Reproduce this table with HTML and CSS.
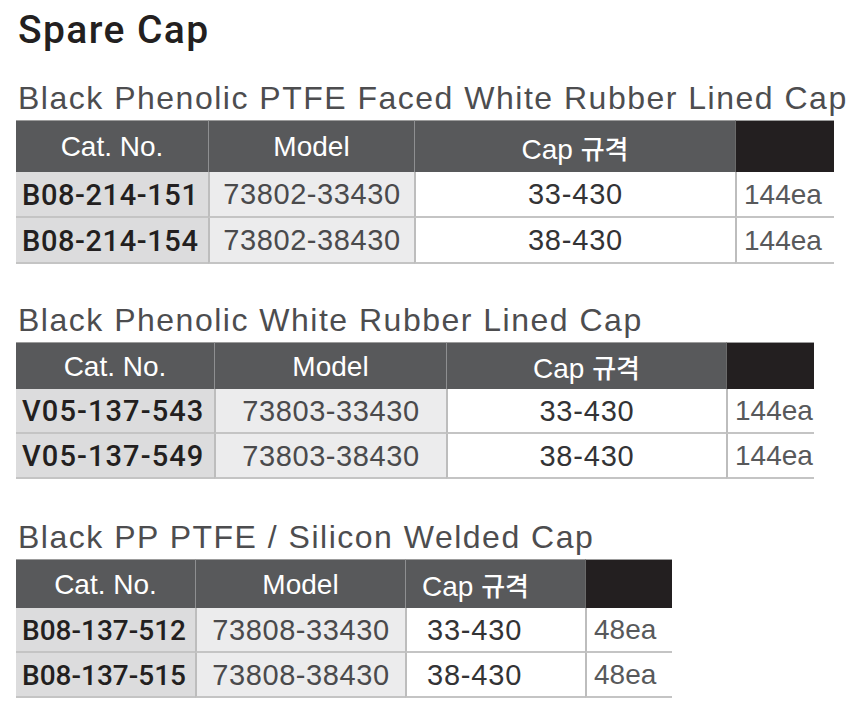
FILE: index.html
```html
<!DOCTYPE html>
<html lang="ko">
<head>
<meta charset="utf-8">
<title>Spare Cap</title>
<link rel="stylesheet" href="styles.css">
</head>
<body>
<main class="page">
  <h1 class="title">Spare Cap</h1>

  <section class="block b1">
    <h2 class="subtitle">Black Phenolic PTFE Faced White Rubber Lined Cap</h2>
    <div class="grid g1">
      <div class="th">Cat. No.</div>
      <div class="th">Model</div>
      <div class="th"><span>Cap <span class="ko">규격</span></span></div>
      <div class="th dark"></div>
      <div class="td cat">B08-214-151</div>
      <div class="td model">73802-33430</div>
      <div class="td cap center">33-430</div>
      <div class="td qty">144ea</div>
      <div class="td cat">B08-214-154</div>
      <div class="td model">73802-38430</div>
      <div class="td cap center">38-430</div>
      <div class="td qty">144ea</div>
    </div>
  </section>

  <section class="block b2">
    <h2 class="subtitle">Black Phenolic White Rubber Lined Cap</h2>
    <div class="grid g2">
      <div class="th">Cat. No.</div>
      <div class="th">Model</div>
      <div class="th"><span>Cap <span class="ko">규격</span></span></div>
      <div class="th dark"></div>
      <div class="td cat">V05-137-543</div>
      <div class="td model">73803-33430</div>
      <div class="td cap center">33-430</div>
      <div class="td qty">144ea</div>
      <div class="td cat">V05-137-549</div>
      <div class="td model">73803-38430</div>
      <div class="td cap center">38-430</div>
      <div class="td qty">144ea</div>
    </div>
  </section>

  <section class="block b3">
    <h2 class="subtitle">Black PP PTFE / Silicon Welded Cap</h2>
    <div class="grid g3">
      <div class="th">Cat. No.</div>
      <div class="th">Model</div>
      <div class="th left"><span>Cap <span class="ko">규격</span></span></div>
      <div class="th dark"></div>
      <div class="td cat">B08-137-512</div>
      <div class="td model">73808-33430</div>
      <div class="td cap">33-430</div>
      <div class="td qty">48ea</div>
      <div class="td cat">B08-137-515</div>
      <div class="td model">73808-38430</div>
      <div class="td cap">38-430</div>
      <div class="td qty">48ea</div>
    </div>
  </section>
</main>
</body>
</html>
```

FILE: styles.css
```css
* { box-sizing: border-box; }
html, body {
  margin: 0;
  padding: 0;
  background: #ffffff;
}
body {
  font-family: "Liberation Sans", Arial, "Noto Sans CJK KR", sans-serif;
  color: #231f20;
}
.page {
  padding: 10px 0 0 16px;
  width: 860px;
}
.title {
  margin: 0 0 0 2px;
  font-family: Roboto, "Liberation Sans", sans-serif;
  font-size: 39px;
  line-height: 40px;
  font-weight: 500;
  letter-spacing: 1.4px;
  color: #231f20;
}
.block { display: flex; flex-direction: column; }
.b1 { margin-top: 31px; }
.b2 { margin-top: 39px; }
.b3 { margin-top: 41px; }
.subtitle {
  margin: 0 0 5px 2px;
  font-size: 32px;
  line-height: 34px;
  font-weight: 400;
  letter-spacing: 1.5px;
  color: #4d4d4f;
  white-space: nowrap;
}
.grid {
  display: grid;
  font-size: 28px;
  white-space: nowrap;
}
.g1 { grid-template-columns: 192px 206px 321px 99px; grid-template-rows: 52px 46px 46px; }
.g2 { grid-template-columns: 198px 232px 280px 88px; grid-template-rows: 47px 45px 45px; }
.g3 { grid-template-columns: 179px 210px 180px 87px; grid-template-rows: 49px 45px 45px; }
.th {
  background: #58595b;
  color: #ffffff;
  display: flex;
  align-items: center;
  justify-content: center;
  border-left: 1px solid #8e8f91;
  border-top: 1px solid #9c9c9c;
  padding-top: 1px;
}
.th:first-child { border-left: none; }
.th.left { justify-content: flex-start; padding-left: 16px; }
.th.dark { background: #231f20; border-left: 1px solid #6a6a6a; }
.ko {
  font-family: "Noto Sans CJK KR", sans-serif;
  font-size: 26px;
  font-weight: 500;
}
.td {
  display: flex;
  align-items: center;
  border-bottom: 2px solid #c4c4c4;
  border-left: 2px solid #bdbdbd;
  padding-top: 1px;
  overflow: hidden;
}
.td.cat {
  border-left: none;
  background: #dcdcdd;
  color: #231f20;
  padding-left: 6px;
  font-family: Roboto, "Liberation Sans", sans-serif;
  font-size: 29px;
  font-weight: 500;
  letter-spacing: 0.6px;
}
.g2 .td.cat { letter-spacing: 1.1px; }
.g3 .td.cat { font-size: 28px; letter-spacing: 0; }
.td.model {
  background: #ececed;
  color: #4a4a4c;
  justify-content: center;
  font-size: 29px;
  letter-spacing: 0.6px;
}
.td.cap {
  background: #ffffff;
  color: #333335;
  padding-left: 20px;
  font-size: 29px;
  letter-spacing: 0.8px;
}
.td.cap.center { justify-content: center; padding-left: 0; }
.td.qty {
  background: #ffffff;
  color: #58595b;
  padding-left: 7px;
}
```
